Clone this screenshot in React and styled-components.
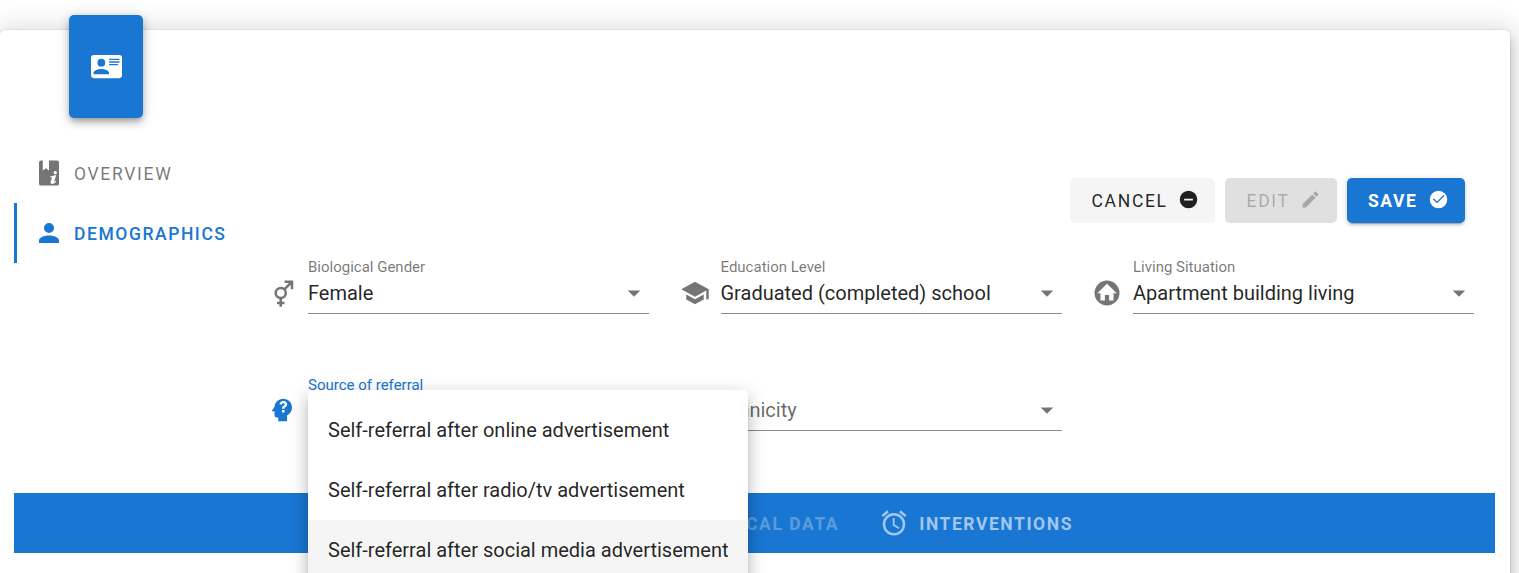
import React from "react";
import styled, { createGlobalStyle } from "styled-components";

const GlobalStyle = createGlobalStyle`
  *, *::before, *::after { box-sizing: border-box; }
  html, body { margin: 0; height: 100%; overflow: hidden; background: #fff; }
  body { font-family: Roboto, sans-serif; font-size: 20px; color: rgba(0, 0, 0, 0.87); }
  #root { height: 100%; }
`;

const blue = "#1976d2";
const grey = "rgba(0, 0, 0, 0.54)";

const paths = {
  card: "M2,3H22C23.05,3 24,3.95 24,5V19C24,20.05 23.05,21 22,21H2C0.95,21 0,20.05 0,19V5C0,3.95 0.95,3 2,3M14,6V7H22V6H14M14,8V9H22V8H14M14,10V11H21V10H14M8,13.91C6,13.91 2,15 2,17V18H14V17C14,15 10,13.91 8,13.91M8,6A3,3 0 0,0 5,9A3,3 0 0,0 8,12A3,3 0 0,0 11,9A3,3 0 0,0 8,6Z",
  bookInfo:
    "M5.5,2A1.5,1.5 0 0,0 4,3.5V20.5A1.5,1.5 0 0,0 5.5,22H18.5A1.5,1.5 0 0,0 20,20.5V3.5A1.5,1.5 0 0,0 18.5,2H12V10L9.5,8.2L7,10V2H5.5M17,10.4A1.3,1.3 0 1,1 17,13A1.3,1.3 0 0,1 17,10.4M13,14.7L17.8,13.5L16.2,18.6C16,19.3 16.6,19.2 17.4,18.2L17.9,18.7C16.5,21 12.7,21.6 13.3,19L14.4,15.5L13.1,15.6L13,14.7Z",
  account:
    "M12,4A4,4 0 0,1 16,8A4,4 0 0,1 12,12A4,4 0 0,1 8,8A4,4 0 0,1 12,4M12,14C16.42,14 20,15.79 20,18V20H4V18C4,15.79 7.58,14 12,14Z",
  minusCircle:
    "M17,13H7V11H17M12,2A10,10 0 0,0 2,12A10,10 0 0,0 12,22A10,10 0 0,0 22,12A10,10 0 0,0 12,2Z",
  pencil:
    "M20.71,7.04C21.1,6.65 21.1,6 20.71,5.63L18.37,3.29C18,2.9 17.35,2.9 16.96,3.29L15.12,5.12L18.87,8.87M3,17.25V21H6.75L17.81,9.93L14.06,6.18L3,17.25Z",
  checkCircle:
    "M12,2A10,10 0 0,0 2,12A10,10 0 0,0 12,22A10,10 0 0,0 22,12A10,10 0 0,0 12,2M10.3,16.4L5.5,11.6L6.6,10.5L10.3,14.2L17.7,6.8L18.8,7.9L10.3,16.4Z",
  gender:
    "M17.58,4H14V2H21V9H19V5.41L15.17,9.24C15.69,10.03 16,11 16,12C16,14.42 14.28,16.44 12,16.9V19H14V21H12V23H10V21H8V19H10V16.9C7.72,16.44 6,14.42 6,12A5,5 0 0,1 11,7C12,7 12.96,7.3 13.75,7.83L17.58,4M11,9A3,3 0 0,0 8,12A3,3 0 0,0 11,15A3,3 0 0,0 14,12A3,3 0 0,0 11,9Z",
  school:
    "M12,3L1,9L12,15L21,10.09V17H23V9M5,13.18V17.18L12,21L19,17.18V13.18L12,17L5,13.18Z",
  homeCircle:
    "M12,2A10,10 0 0,1 22,12A10,10 0 0,1 12,22A10,10 0 0,1 2,12A10,10 0 0,1 12,2M12,4.6L4.2,12.1H6.75V18H10.3V13.5H13.7V18H17.25V12.1H19.8L12,4.6Z",
  headQuestion:
    "M13,3C9.23,3 6.19,5.95 6,9.66L4.08,12.19C3.84,12.5 4.08,13 4.5,13H6V16A2,2 0 0,0 8,18H9V21H16V16.31C18.37,15.19 20,12.8 20,10C20,6.14 16.88,3 13,3M14,14H12V12H14V14M15.75,8.8C15.4,9.35 14.85,9.7 14.35,10C14.1,10.2 14,10.5 14,11H12C12,10 12.25,9.2 12.9,8.8C13.4,8.5 13.85,8.25 14.05,7.95C14.5,7.25 13.85,6.5 13,6.5C12.4,6.5 12,6.95 12,7.5H10C10,5.9 11.35,4.75 13,4.75C15.4,4.75 16.85,6.9 15.75,8.8Z",
  menuDown: "M7,10L12,15L17,10H7Z",
  alarm:
    "M12,20A7,7 0 0,1 5,13A7,7 0 0,1 12,6A7,7 0 0,1 19,13A7,7 0 0,1 12,20M12,4A9,9 0 0,0 3,13A9,9 0 0,0 12,22A9,9 0 0,0 21,13A9,9 0 0,0 12,4M12.5,8H11V14L15.75,16.85L16.5,15.62L12.5,13.25V8M7.88,3.39L6.6,1.86L2,5.71L3.29,7.24L7.88,3.39M22,5.72L17.4,1.86L16.11,3.39L20.71,7.25L22,5.72Z",
};

const Svg = styled.svg`
  display: block;
  flex: none;
  width: ${(p) => p.$size}px;
  height: ${(p) => p.$size}px;
  fill: currentColor;
`;

const Icon = ({ name, size = 30 }) => (
  <Svg $size={size} viewBox="0 0 24 24" aria-hidden="true">
    <path fillRule="evenodd" d={paths[name]} />
  </Svg>
);

const Page = styled.div`
  height: 100%;
  padding-top: 30px;
  overflow: hidden;
`;

const Card = styled.section`
  display: flow-root;
  width: 1510px;
  height: 700px;
  padding: 0 15px 0 14px;
  background: #fff;
  border-radius: 5px;
  box-shadow: 0 0 0 1px rgba(0, 0, 0, 0.05), 0 4px 5px -2px rgba(0, 0, 0, 0.2),
    0 9px 12px 1px rgba(0, 0, 0, 0.12), 0 4px 28px 6px rgba(0, 0, 0, 0.14);
`;

const Badge = styled.div`
  display: flex;
  align-items: center;
  justify-content: center;
  width: 74px;
  height: 103px;
  margin: -15px 0 25px 55px;
  color: #fff;
  background: ${blue};
  border-radius: 5px;
  box-shadow: 0 4px 5px -2px rgba(0, 0, 0, 0.2), 0 5px 8px 0 rgba(0, 0, 0, 0.18),
    0 1px 14px 0 rgba(0, 0, 0, 0.14);
`;

const Body = styled.div`
  display: flex;
  height: 350px;
`;

const SideTabs = styled.nav`
  width: 253px;
  flex: none;
`;

const SideTab = styled.a`
  display: flex;
  align-items: center;
  gap: 10px;
  height: 60px;
  padding-left: 17px;
  border-left: 3px solid ${(p) => (p.$active ? blue : "transparent")};
  color: ${(p) => (p.$active ? blue : grey)};
  font-size: 17.5px;
  font-weight: ${(p) => (p.$active ? 500 : 400)};
  letter-spacing: ${(p) => (p.$active ? "0.0892857em" : "0.096em")};
`;

const TabText = styled.span`
  padding-top: 2px;
`;

const Main = styled.main`
  flex: 1;
  padding-top: 35px;
`;

const Actions = styled.div`
  display: flex;
  justify-content: flex-end;
  gap: 10px;
  padding-right: 30px;
`;

const variants = {
  plain: "background: #f5f5f5; color: rgba(0, 0, 0, 0.87); width: 145px;",
  disabled: "background: #e0e0e0; color: rgba(0, 0, 0, 0.26); width: 112px;",
  primary: `background: ${blue}; color: #fff; width: 118px; padding-left: 21px; font-weight: 700; letter-spacing: 0.0892857em;
    box-shadow: 0 4px 1px -3px rgba(0,0,0,.2), 0 2px 3px 0 rgba(0,0,0,.14), 0 1px 6px 0 rgba(0,0,0,.12);`,
};

const Button = styled.button`
  display: flex;
  align-items: center;
  justify-content: space-between;
  height: 45px;
  padding: 0 16px 2px 21.5px;
  border: 0;
  border-radius: 5px;
  font: 400 17.5px Roboto, sans-serif;
  letter-spacing: 0.097em;
  ${(p) => variants[p.$variant]}
`;

const Fields = styled.div`
  display: grid;
  grid-template-columns: repeat(3, 382px);
  column-gap: 30.5px;
  row-gap: 61px;
  margin-top: 35px;
`;

const Field = styled.div`
  display: flex;
  align-items: flex-start;
  gap: 11px;
  height: 56px;
  color: ${(p) => (p.$active ? blue : grey)};
`;

const FieldIcon = styled.span`
  padding-top: 20px;
`;

const Control = styled.div`
  flex: 1;
  height: 56px;
  border-bottom: 1px solid rgba(0, 0, 0, 0.46);
`;

const Label = styled.div`
  height: 18px;
  font-size: 15px;
  line-height: ${(p) => (p.$active ? 20 : 18)}px;
  white-space: nowrap;
`;

const Value = styled.div`
  display: flex;
  align-items: center;
  justify-content: space-between;
  height: 34px;
  line-height: 34px;
  white-space: nowrap;
`;

const ValueText = styled.span`
  color: ${(p) => (p.$placeholder ? "rgba(0, 0, 0, 0.6)" : "rgba(0, 0, 0, 0.87)")};
`;

const MenuAnchor = styled.div`
  position: relative;
`;

const Menu = styled.div`
  position: absolute;
  top: -3px;
  left: 0;
  z-index: 2;
  width: 440px;
  height: 380px;
  padding: 10px 0;
  background: #fff;
  border-radius: 5px;
  box-shadow: 0 6px 6px -4px rgba(0, 0, 0, 0.2), 0 10px 13px 1px rgba(0, 0, 0, 0.14),
    0 4px 18px 3px rgba(0, 0, 0, 0.12);
`;

const MenuItem = styled.div`
  display: flex;
  align-items: center;
  height: 60px;
  padding: 0 20px;
  color: rgba(0, 0, 0, 0.87);
  background: ${(p) => (p.$hover ? "#f5f5f5" : "transparent")};
  white-space: nowrap;
`;

const BottomTabs = styled.nav`
  display: flex;
  justify-content: flex-end;
  height: 60px;
  padding-right: 402px;
  background: ${blue};
`;

const BottomTab = styled.a`
  display: flex;
  align-items: center;
  gap: 10px;
  padding: 0 20px;
  color: ${(p) => (p.$disabled ? "rgba(255, 255, 255, 0.3)" : "rgba(255, 255, 255, 0.6)")};
  font-size: 17.5px;
  font-weight: 700;
  letter-spacing: 0.0892857em;
`;

function Select({ icon, label, value, placeholder, active, children }) {
  return (
    <Field $active={active}>
      <FieldIcon>
        <Icon name={icon} />
      </FieldIcon>
      <Control>
        <Label $active={active}>{label}</Label>
        <MenuAnchor>
          <Value>
            <ValueText $placeholder={!value}>{value || placeholder}</ValueText>
            <Icon name="menuDown" />
          </Value>
          {children}
        </MenuAnchor>
      </Control>
    </Field>
  );
}

const options = [
  "Self-referral after online advertisement",
  "Self-referral after radio/tv advertisement",
  "Self-referral after social media advertisement",
];

export default function App() {
  return (
    <>
      <GlobalStyle />
      <Page>
        <Card>
          <Badge>
            <Icon name="card" size={31} />
          </Badge>
          <Body>
            <SideTabs>
              <SideTab>
                <Icon name="bookInfo" />
                <TabText>OVERVIEW</TabText>
              </SideTab>
              <SideTab $active>
                <Icon name="account" />
                <TabText>DEMOGRAPHICS</TabText>
              </SideTab>
            </SideTabs>
            <Main>
              <Actions>
                <Button $variant="plain">
                  <TabText>CANCEL</TabText>
                  <Icon name="minusCircle" size={21} />
                </Button>
                <Button $variant="disabled" disabled>
                  <TabText>EDIT</TabText>
                  <Icon name="pencil" size={21} />
                </Button>
                <Button $variant="primary">
                  <TabText>SAVE</TabText>
                  <Icon name="checkCircle" size={21} />
                </Button>
              </Actions>
              <Fields>
                <Select icon="gender" label="Biological Gender" value="Female" />
                <Select icon="school" label="Education Level" value="Graduated (completed) school" />
                <Select icon="homeCircle" label="Living Situation" value="Apartment building living" />
                <Select icon="headQuestion" label="Source of referral" active>
                  <Menu>
                    {options.map((option, i) => (
                      <MenuItem key={option} $hover={i === 2}>
                        {option}
                      </MenuItem>
                    ))}
                  </Menu>
                </Select>
                <Select icon="school" placeholder="Ethnicity" />
              </Fields>
            </Main>
          </Body>
          <BottomTabs>
            <BottomTab $disabled>
              <TabText>MEDICAL DATA</TabText>
            </BottomTab>
            <BottomTab>
              <Icon name="alarm" />
              <TabText>INTERVENTIONS</TabText>
            </BottomTab>
          </BottomTabs>
        </Card>
      </Page>
    </>
  );
}
